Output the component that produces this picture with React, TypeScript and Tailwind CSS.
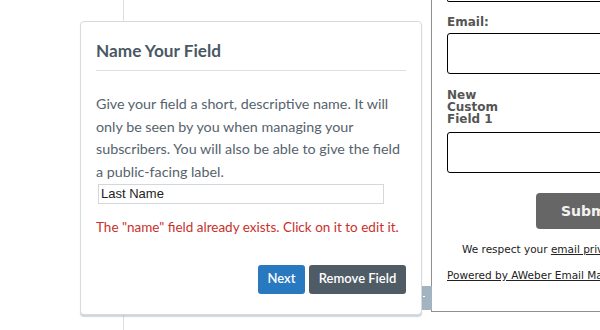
export default function App() {
  return (
    <div className="relative w-[600px] h-[330px] overflow-hidden bg-white">
      <div className="flex h-full">
        <div className="w-[124px] shrink-0 h-full border-r border-[#dddddd]" />
        <div className="w-[307px] shrink-0" />
        <div className="w-[260px] shrink-0 h-[312px] border-l border-b border-[#8f8f8f] pl-[15px] font-['DejaVu_Sans',Verdana,sans-serif]">
          <div className="h-[2px] border-x border-b border-black rounded-b-[3px]" />
          <div className="mt-[14px] text-[12px] leading-[12px] font-bold text-[#555555]">Email:</div>
          <div className="mt-[5px] h-[41px] border border-black rounded-[3px]" />
          <div className="mt-[15px] w-[60px] text-[12px] leading-[12px] font-bold text-[#555555]">New Custom Field 1</div>
          <div className="mt-[7px] h-[41px] border border-black rounded-[3px]" />
          <div className="mt-[20px] ml-[89px] h-[36px] w-[120px] bg-[#666666] rounded-[4px] pl-[25px] flex items-center text-[14px] font-bold text-[#f2f2f2]">Submit</div>
          <div className="mt-[14px] pl-[15px] text-[10.5px] leading-[13px] text-[#222222] whitespace-nowrap">
            We respect your <span className="underline">email privacy</span>
          </div>
          <div className="mt-[13px] text-[10.5px] leading-[13px] text-[#222222] underline whitespace-nowrap">
            Powered by AWeber Email Marketing
          </div>
        </div>
      </div>

      <div className="absolute left-[421px] top-[286px] w-[11px] h-[24px] bg-[#a3b3bf]">
        <div className="absolute left-[2px] top-[10px] w-[2px] h-[1px] bg-white" />
      </div>

      <div className="absolute left-[80px] top-[21px] w-[342px] bg-white border border-[#d5dadf] rounded-[4px] shadow-[0_2px_1px_rgba(150,165,178,0.45)] px-[15px] pt-[18px] pb-[20px] font-['Lato',sans-serif]">
        <div className="pb-[8px] border-b border-[#dde1e5] text-[17.2px] leading-[22px] font-bold text-[#4a5864] whitespace-nowrap">
          Name Your Field
        </div>
        <p className="mt-[22px] text-[14.3px] leading-[22.5px] text-[#56636d] whitespace-nowrap">
          Give your field a short, descriptive name. It will
          <br />
          only be seen by you when managing your
          <br />
          subscribers. You will also be able to give the field
          <br />
          a public-facing label.
        </p>
        <div className="mt-[1px] ml-[2px] w-[286px] h-[20px] border border-[#d3d7db] pl-[2px] flex items-center text-[13px] text-[#222222] font-['Liberation_Sans',Arial,sans-serif]">
          Last Name
        </div>
        <p className="mt-[12px] text-[13.5px] leading-[22.5px] text-[#c9302c] whitespace-nowrap">
          The "name" field already exists. Click on it to edit it.
        </p>
        <div className="mt-[26px] flex justify-end gap-[4px]">
          <div className="w-[47px] h-[29px] rounded-[3px] bg-[#2979c1] text-white text-[13px] font-semibold flex items-center justify-center">
            Next
          </div>
          <div className="w-[97px] h-[29px] rounded-[3px] bg-[#4f5b65] text-white text-[13px] font-semibold flex items-center justify-center">
            Remove Field
          </div>
        </div>
      </div>
    </div>
  );
}
